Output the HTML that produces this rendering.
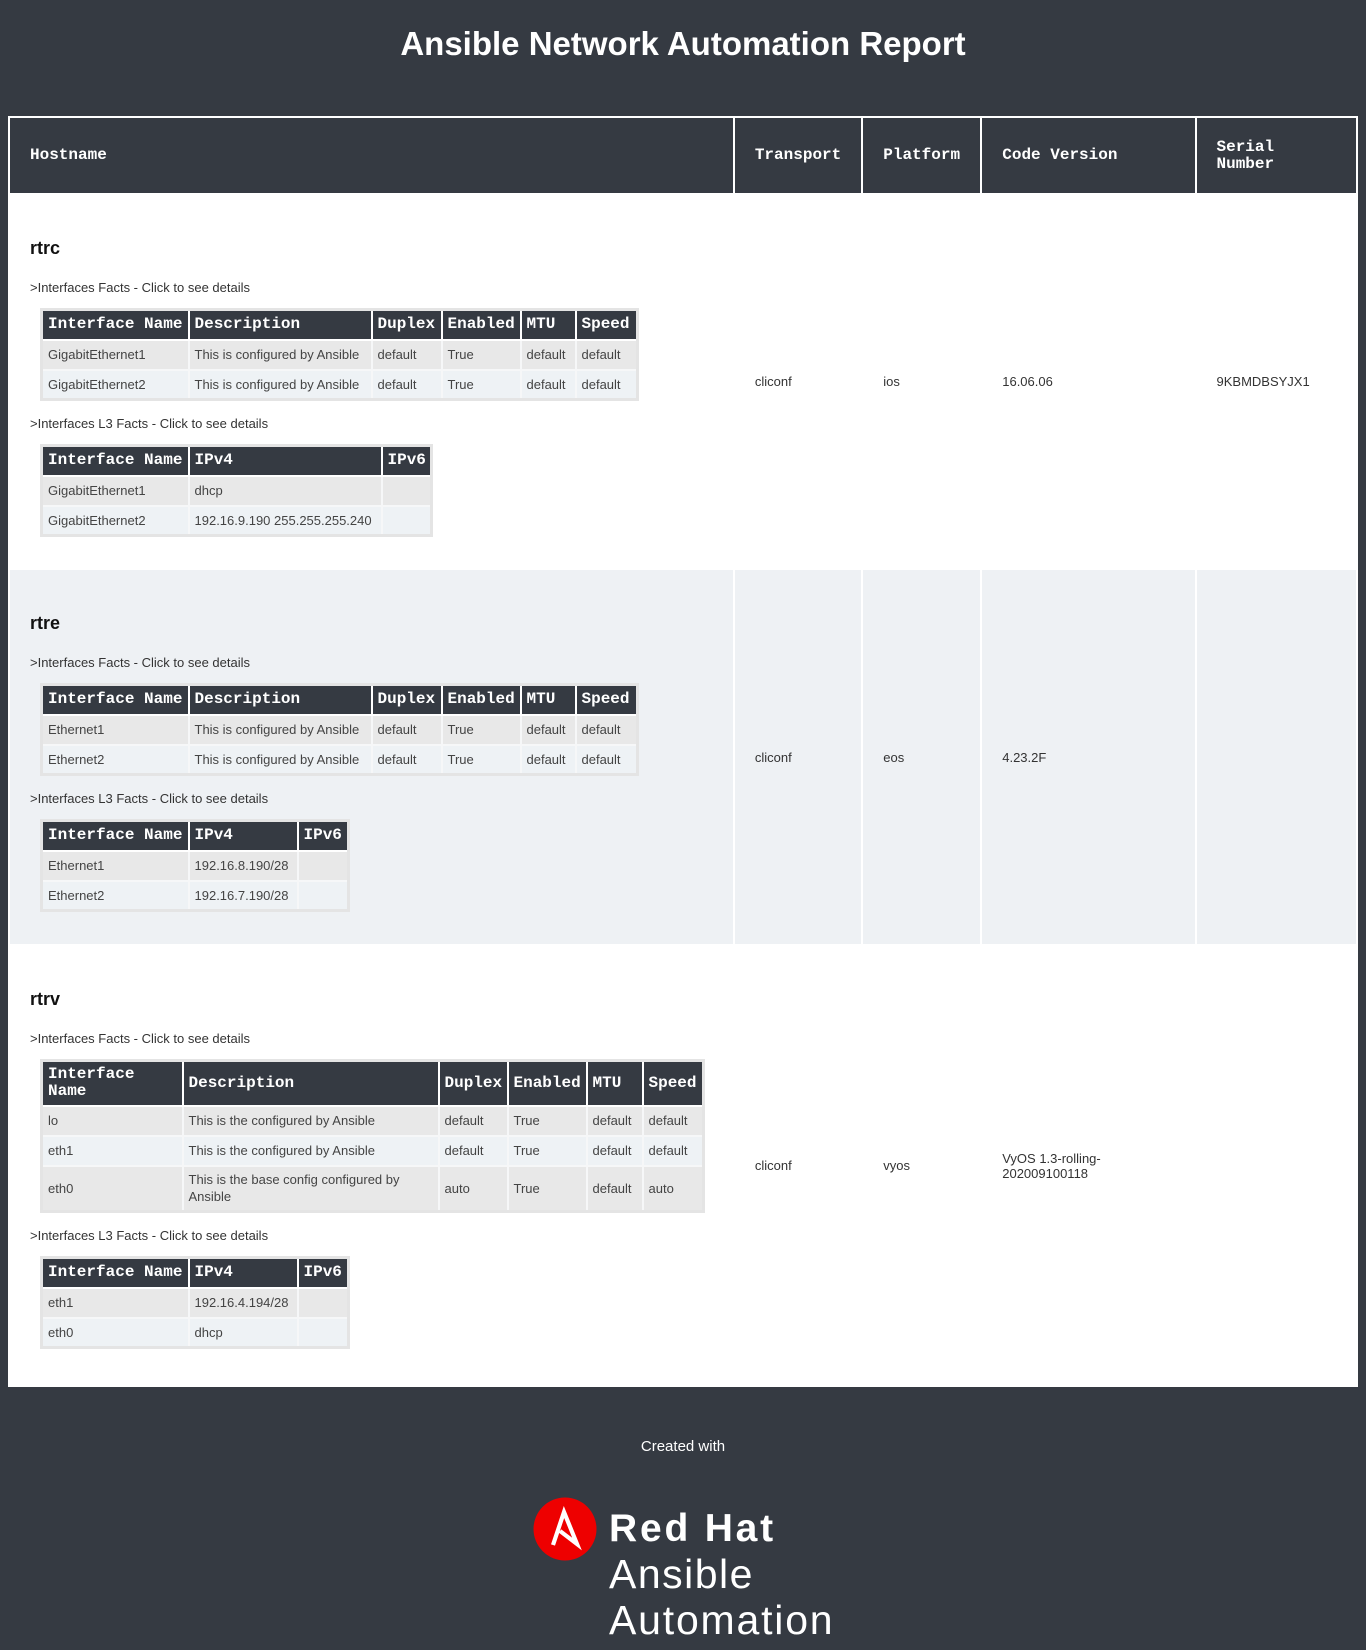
<!DOCTYPE html>
<html><head><meta charset="utf-8"><style>
*{box-sizing:border-box;margin:0;padding:0}
body{width:1366px;height:1650px;background:#353a42;font-family:"Liberation Sans",sans-serif;color:#222;overflow:hidden}
h1{color:#fff;text-align:center;font-size:33px;font-weight:bold;height:116px;line-height:88px}
table.main{position:absolute;left:8px;top:116px;width:1350px;border-collapse:collapse;background:#fff;border-top:2px solid #fff}
.main>thead th{background:#353a42;color:#fff;font:bold 16px "Liberation Mono",monospace;text-align:left;padding:0 20px;height:77px;border:2px solid #fff;border-top:0;vertical-align:middle;line-height:17px}
.main>tbody>tr>td{border:2px solid #fff;vertical-align:middle;font-size:13px;padding:0 20px;color:#333}
.main>tbody>tr.alt>td{background:#eef1f4}
.main>tbody>tr>td.host{vertical-align:top;padding-left:20px}
h3{font-size:18px;font-weight:bold;height:26px;line-height:26px;margin-top:40px;color:#111}
.lbl{font-size:13px;line-height:18px;height:18px;color:#333}
.l1{margin-top:18px}
.l2{margin-top:14px}
table.in{border-collapse:collapse;table-layout:fixed;border:3px solid #e4e4e4;margin:11px 0 0 10px}
.in th{background:#353a42;color:#fff;font:bold 16px "Liberation Mono",monospace;text-align:left;padding:0 5px;height:30px;border:2px solid #fff;white-space:nowrap;line-height:17px}
.in td{font-size:13px;color:#444;padding:0 5px;height:30px;border:2px solid #f6f7f8;background:#eef2f5;white-space:nowrap}
.in tr:nth-child(even) td{background:#e8e8e8}
.in th.w{white-space:normal}
.in td.w{white-space:normal;line-height:17px}
.foot{position:absolute;left:0;width:1366px;text-align:center;color:#fff}
</style></head><body>
<h1>Ansible Network Automation Report</h1>
<table class="main">
<colgroup><col style="width:725px"><col style="width:128px"><col style="width:119px"><col style="width:216px"><col style="width:162px"></colgroup>
<thead><tr><th>Hostname</th><th>Transport</th><th>Platform</th><th>Code Version</th><th>Serial<br>Number</th></tr></thead>
<tbody>
<tr style="height:375px"><td class="host">
<h3>rtrc</h3>
<div class="lbl l1">&gt;Interfaces Facts - Click to see details</div>
<table class="in" style="width:596px"><colgroup><col style="width:147px"><col style="width:183px"><col style="width:70px"><col style="width:79px"><col style="width:55px"><col style="width:62px"></colgroup>
<tr><th>Interface Name</th><th>Description</th><th>Duplex</th><th>Enabled</th><th>MTU</th><th>Speed</th></tr>
<tr><td>GigabitEthernet1</td><td>This is configured by Ansible</td><td>default</td><td>True</td><td>default</td><td>default</td></tr>
<tr><td>GigabitEthernet2</td><td>This is configured by Ansible</td><td>default</td><td>True</td><td>default</td><td>default</td></tr>
</table>
<div class="lbl l2">&gt;Interfaces L3 Facts - Click to see details</div>
<table class="in" style="width:390px"><colgroup><col style="width:147px"><col style="width:193px"><col style="width:50px"></colgroup>
<tr><th>Interface Name</th><th>IPv4</th><th>IPv6</th></tr>
<tr><td>GigabitEthernet1</td><td>dhcp</td><td></td></tr>
<tr><td>GigabitEthernet2</td><td>192.16.9.190 255.255.255.240</td><td></td></tr>
</table>
</td><td>cliconf</td><td>ios</td><td>16.06.06</td><td>9KBMDBSYJX1</td></tr>

<tr class="alt" style="height:376px"><td class="host">
<h3>rtre</h3>
<div class="lbl l1">&gt;Interfaces Facts - Click to see details</div>
<table class="in" style="width:596px"><colgroup><col style="width:147px"><col style="width:183px"><col style="width:70px"><col style="width:79px"><col style="width:55px"><col style="width:62px"></colgroup>
<tr><th>Interface Name</th><th>Description</th><th>Duplex</th><th>Enabled</th><th>MTU</th><th>Speed</th></tr>
<tr><td>Ethernet1</td><td>This is configured by Ansible</td><td>default</td><td>True</td><td>default</td><td>default</td></tr>
<tr><td>Ethernet2</td><td>This is configured by Ansible</td><td>default</td><td>True</td><td>default</td><td>default</td></tr>
</table>
<div class="lbl l2">&gt;Interfaces L3 Facts - Click to see details</div>
<table class="in" style="width:307px"><colgroup><col style="width:147px"><col style="width:109px"><col style="width:51px"></colgroup>
<tr><th>Interface Name</th><th>IPv4</th><th>IPv6</th></tr>
<tr><td>Ethernet1</td><td>192.16.8.190/28</td><td></td></tr>
<tr><td>Ethernet2</td><td>192.16.7.190/28</td><td></td></tr>
</table>
</td><td>cliconf</td><td>eos</td><td>4.23.2F</td><td></td></tr>

<tr style="height:441px"><td class="host">
<h3>rtrv</h3>
<div class="lbl l1">&gt;Interfaces Facts - Click to see details</div>
<table class="in" style="width:662px"><colgroup><col style="width:141px"><col style="width:256px"><col style="width:69px"><col style="width:79px"><col style="width:56px"><col style="width:61px"></colgroup>
<tr><th class="w" style="height:45px">Interface Name</th><th>Description</th><th>Duplex</th><th>Enabled</th><th>MTU</th><th>Speed</th></tr>
<tr><td>lo</td><td>This is the configured by Ansible</td><td>default</td><td>True</td><td>default</td><td>default</td></tr>
<tr><td>eth1</td><td>This is the configured by Ansible</td><td>default</td><td>True</td><td>default</td><td>default</td></tr>
<tr><td style="height:46px">eth0</td><td class="w">This is the base config configured by Ansible</td><td>auto</td><td>True</td><td>default</td><td>auto</td></tr>
</table>
<div class="lbl l2">&gt;Interfaces L3 Facts - Click to see details</div>
<table class="in" style="width:307px"><colgroup><col style="width:147px"><col style="width:109px"><col style="width:51px"></colgroup>
<tr><th>Interface Name</th><th>IPv4</th><th>IPv6</th></tr>
<tr><td>eth1</td><td>192.16.4.194/28</td><td></td></tr>
<tr><td>eth0</td><td>dhcp</td><td></td></tr>
</table>
</td><td>cliconf</td><td>vyos</td><td>VyOS 1.3-rolling-<br>202009100118</td><td></td></tr>
</tbody></table>

<div class="foot" style="top:1437px;font-size:15px;line-height:20px">Created with</div>
<svg style="position:absolute;left:533px;top:1497px" width="64" height="64" viewBox="-32 -32 64 64">
<circle r="31.5" fill="#e00"/>
<path d="M-12,16 L-1,-17 L12,15 L-5,2" fill="none" stroke="#fff" stroke-width="4.2" stroke-linejoin="miter"/>
</svg>
<div style="position:absolute;left:609px;top:1507px;color:#fff;font-weight:bold;font-size:39px;line-height:44px;letter-spacing:2.8px">Red Hat</div>
<div style="position:absolute;left:609px;top:1551px;color:#fff;font-size:41px;line-height:46px;letter-spacing:1.5px">Ansible</div>
<div style="position:absolute;left:609px;top:1597px;color:#fff;font-size:41px;line-height:46px;letter-spacing:1.8px">Automation</div>
</body></html>
